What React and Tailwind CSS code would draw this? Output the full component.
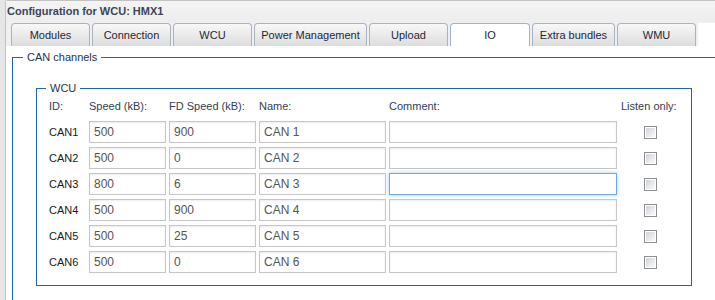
import React from "react";

const tabs = [
  { name: "Modules", w: "w-[79px]" },
  { name: "Connection", w: "w-[79px]" },
  { name: "WCU", w: "w-[79px]" },
  { name: "Power Management", w: "w-[113px]" },
  { name: "Upload", w: "w-[79px]" },
  { name: "IO", w: "w-[80px]", active: true },
  { name: "Extra bundles", w: "w-[83px]" },
  { name: "WMU", w: "w-[79px]" },
];

const rows = [
  { id: "CAN1", speed: "500", fd: "900", name: "CAN 1" },
  { id: "CAN2", speed: "500", fd: "0", name: "CAN 2" },
  { id: "CAN3", speed: "800", fd: "6", name: "CAN 3", focus: true },
  { id: "CAN4", speed: "500", fd: "900", name: "CAN 4" },
  { id: "CAN5", speed: "500", fd: "25", name: "CAN 5" },
  { id: "CAN6", speed: "500", fd: "0", name: "CAN 6" },
];

function Field({ value, focus }) {
  return (
    <div
      className={
        "h-[22px] flex items-center pl-[4px] bg-white border text-[12px] text-[#555] " +
        (focus
          ? "border-[#6aaae6] shadow-[0_0_4px_rgba(90,160,235,0.55)]"
          : "border-[#c6c6c6] shadow-[inset_0_1px_2px_rgba(0,0,0,0.08)]")
      }
    >
      {value}
    </div>
  );
}

function Check() {
  return (
    <div className="w-[13px] h-[13px] border border-[#8e8e8e] bg-white p-[1px]">
      <div className="w-full h-full bg-gradient-to-br from-[#d0d4db] to-[#fafafa]" />
    </div>
  );
}

export default function App() {
  return (
    <div
      className="w-[715px] h-[300px] overflow-hidden bg-[#e6e6e6] pl-[5px]"
      style={{ fontFamily: '"Liberation Sans", Arial, sans-serif' }}
    >
      <div className="h-full flex flex-col border-l border-t border-[#c2c2c2] rounded-tl-[3px] bg-[#f0f0f0]">
        <div className="h-[21px] flex items-center pl-[1px] text-[11px] font-bold text-[#3a4655] bg-gradient-to-b from-[#f4f4f4] to-[#ededed]">
          Configuration for WCU: HMX1
        </div>
        <div className="h-[24px] flex items-end pl-[5px] gap-[2px]">
          {tabs.map((t) => (
            <div
              key={t.name}
              className={
                t.w +
                " h-[23px] shrink-0 flex items-center justify-center rounded-t-[4px] border border-b-0 text-[11px] text-[#1d2836] " +
                (t.active
                  ? "bg-white border-[#9fb1cb]"
                  : "bg-gradient-to-b from-[#f8f8f8] to-[#dddddd] border-[#a9b2c0]")
              }
            >
              {t.name}
            </div>
          ))}
          <div className="flex-1 h-[23px] bg-white" />
        </div>
        <div className="flex-1 bg-white overflow-hidden">
          <fieldset className="mt-[5px] ml-[6px] w-[720px] border border-[#2463a9] pl-[23px] pb-[20px]">
            <legend className="ml-[-13px] px-[4px] text-[11px] leading-[13px] text-[#263447]">
              CAN channels
            </legend>
            <fieldset className="mt-[18px] w-[656px] border border-[#2463a9] pl-[12px] pb-[12px]">
              <legend className="ml-[-3px] px-[4px] text-[11px] leading-[13px] text-[#263447]">
                WCU
              </legend>
              <div className="grid grid-cols-[37px_77px_87px_127px_228px_60px] gap-x-[3px] gap-y-[4px] items-center text-[11px]">
                <div className="h-[22px] flex items-center text-[#34404f]">ID:</div>
                <div className="h-[22px] flex items-center text-[#34404f]">Speed (kB):</div>
                <div className="h-[22px] flex items-center text-[#34404f]">FD Speed (kB):</div>
                <div className="h-[22px] flex items-center text-[#34404f]">Name:</div>
                <div className="h-[22px] flex items-center text-[#34404f]">Comment:</div>
                <div className="h-[22px] flex items-center pl-[1px] text-[#34404f] whitespace-nowrap">
                  Listen only:
                </div>
                {rows.map((r) => (
                  <React.Fragment key={r.id}>
                    <div className="h-[22px] flex items-center text-[#1a1a1a]">{r.id}</div>
                    <Field value={r.speed} />
                    <Field value={r.fd} />
                    <Field value={r.name} />
                    <Field value="" focus={r.focus} />
                    <div className="flex pl-[24px]">
                      <Check />
                    </div>
                  </React.Fragment>
                ))}
              </div>
            </fieldset>
          </fieldset>
        </div>
      </div>
    </div>
  );
}
